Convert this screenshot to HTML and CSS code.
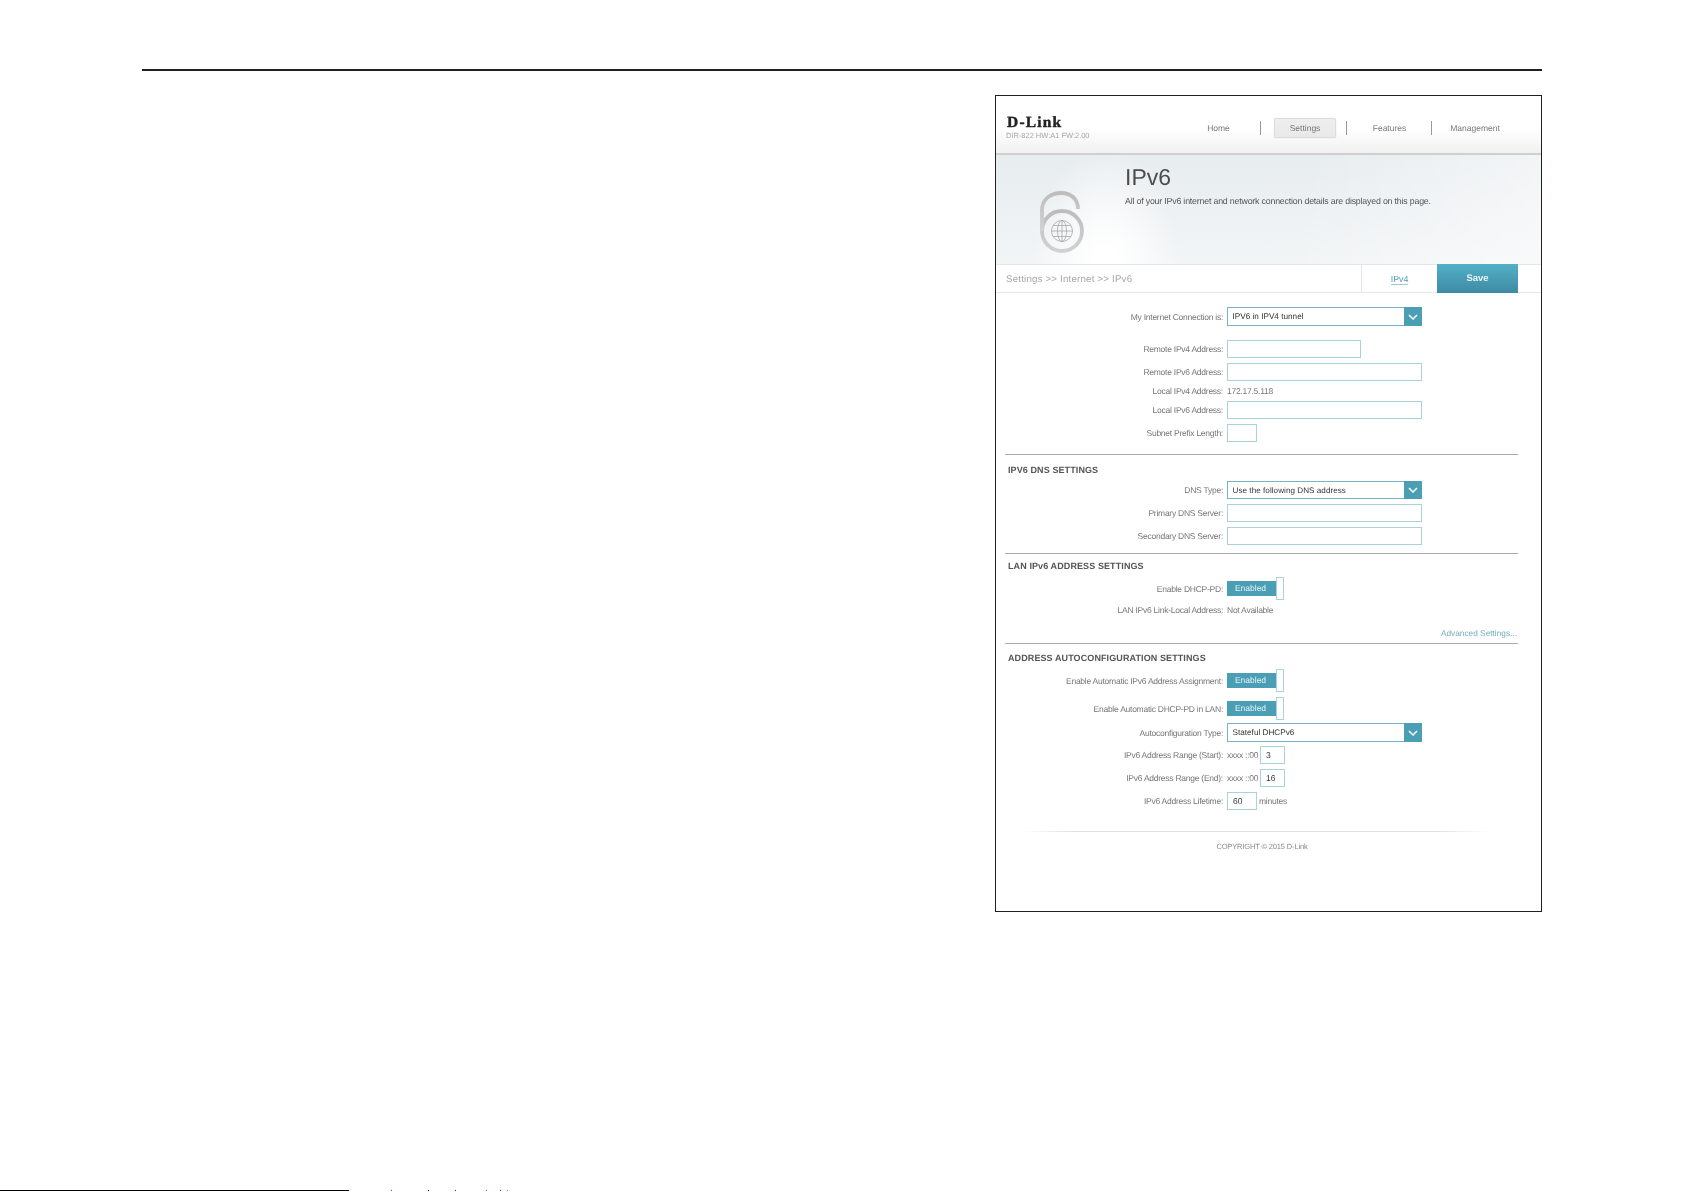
FILE: index.html
```html
<!DOCTYPE html>
<html lang="en">
<head>
<meta charset="utf-8">
<title>D-Link IPv6 Settings</title>
<link rel="stylesheet" href="styles.css">
</head>
<body>
<div class="page">
  <div class="top-rule"></div>
  <div class="stage">
    <main class="window">
      <header class="masthead">
        <div class="brand">
          <div class="logo">D-Link</div>
          <div class="model">DIR-822 HW:A1 FW:2.00</div>
        </div>
        <nav class="nav">
          <a class="nav-item nav-home">Home</a>
          <span class="nav-sep"></span>
          <a class="nav-item nav-active">Settings</a>
          <span class="nav-sep"></span>
          <a class="nav-item nav-features">Features</a>
          <span class="nav-sep"></span>
          <a class="nav-item nav-manage">Management</a>
        </nav>
      </header>
      <section class="hero">
        <svg class="lock" width="50" height="66" viewBox="0 0 50 66" aria-hidden="true">
          <defs>
            <linearGradient id="ring" x1="0" y1="0" x2="0" y2="1">
              <stop offset="0" stop-color="#bdbdbd"/>
              <stop offset="1" stop-color="#d2d2d2"/>
            </linearGradient>
          </defs>
          <path class="lock-ring" d="M44 41A20 20 0 1 1 4 41A20 20 0 1 1 44 41Z"/>
          <path class="lock-ring" d="M4 41V20C4 9 13 3 23 3C33 3 40 9 40 19"/>
          <g class="globe">
            <circle cx="24" cy="41" r="10.500"/>
            <ellipse cx="24" cy="41" rx="4.500" ry="10.500"/>
            <path d="M24 30.500V51.500M13.500 41H34.500M15 35.500H33M15 46.500H33"/>
          </g>
        </svg>
        <div class="hero-text">
          <h1 class="title">IPv6</h1>
          <p class="subtitle">All of your IPv6 internet and network connection details are displayed on this page.</p>
        </div>
      </section>
      <div class="crumbbar">
        <div class="crumbs">Settings &gt;&gt; Internet &gt;&gt; IPv6</div>
        <a class="tab-link"><span>IPv4</span></a>
        <a class="save">Save</a>
      </div>

      <section class="form">
        <div class="row row-select first">
          <label class="label">My Internet Connection is:</label>
          <div class="select"><span class="select-text">IPV6 in IPV4 tunnel</span><span class="arrow"><svg width="10" height="6" viewBox="0 0 10 6"><path d="M1 1L5 5L9 1"/></svg></span></div>
        </div>
        <div class="row row-input gap-large">
          <label class="label">Remote IPv4 Address:</label>
          <div class="input input-medium"></div>
        </div>
        <div class="row row-input">
          <label class="label">Remote IPv6 Address:</label>
          <div class="input"></div>
        </div>
        <div class="row row-text">
          <label class="label">Local IPv4 Address:</label>
          <span class="value">172.17.5.118</span>
        </div>
        <div class="row row-input flush">
          <label class="label">Local IPv6 Address:</label>
          <div class="input"></div>
        </div>
        <div class="row row-input">
          <label class="label">Subnet Prefix Length:</label>
          <div class="input input-small"></div>
        </div>
      </section>

      <section class="form ruled ruled-dns">
        <h2 class="heading">IPV6 DNS SETTINGS</h2>
        <div class="row row-select row-select-short after-heading">
          <label class="label">DNS Type:</label>
          <div class="select"><span class="select-text small">Use the following DNS address</span><span class="arrow"><svg width="10" height="6" viewBox="0 0 10 6"><path d="M1 1L5 5L9 1"/></svg></span></div>
        </div>
        <div class="row row-input">
          <label class="label">Primary DNS Server:</label>
          <div class="input"></div>
        </div>
        <div class="row row-input">
          <label class="label">Secondary DNS Server:</label>
          <div class="input"></div>
        </div>
      </section>

      <section class="form ruled ruled-lan">
        <h2 class="heading">LAN IPv6 ADDRESS SETTINGS</h2>
        <div class="row row-toggle after-heading-toggle">
          <label class="label">Enable DHCP-PD:</label>
          <div class="toggle"><span class="toggle-on">Enabled</span><span class="toggle-knob"></span></div>
        </div>
        <div class="row row-text">
          <label class="label">LAN IPv6 Link-Local Address:</label>
          <span class="value">Not Available</span>
        </div>
        <a class="advanced">Advanced Settings...</a>
      </section>

      <section class="form ruled ruled-auto">
        <h2 class="heading">ADDRESS AUTOCONFIGURATION SETTINGS</h2>
        <div class="row row-toggle after-heading-toggle">
          <label class="label">Enable Automatic IPv6 Address Assignment:</label>
          <div class="toggle"><span class="toggle-on">Enabled</span><span class="toggle-knob"></span></div>
        </div>
        <div class="row row-toggle">
          <label class="label">Enable Automatic DHCP-PD in LAN:</label>
          <div class="toggle"><span class="toggle-on">Enabled</span><span class="toggle-knob"></span></div>
        </div>
        <div class="row row-select micro">
          <label class="label">Autoconfiguration Type:</label>
          <div class="select"><span class="select-text">Stateful DHCPv6</span><span class="arrow"><svg width="10" height="6" viewBox="0 0 10 6"><path d="M1 1L5 5L9 1"/></svg></span></div>
        </div>
        <div class="row row-input tight">
          <label class="label">IPv6 Address Range (Start):</label>
          <span class="value prefix">xxxx ::00</span>
          <div class="input input-tiny">3</div>
        </div>
        <div class="row row-input">
          <label class="label">IPv6 Address Range (End):</label>
          <span class="value prefix">xxxx ::00</span>
          <div class="input input-tiny">16</div>
        </div>
        <div class="row row-input">
          <label class="label">IPv6 Address Lifetime:</label>
          <div class="input input-small">60</div>
          <span class="value unit">minutes</span>
        </div>
      </section>

      <footer class="footer">
        <div class="footer-line"></div>
        <div class="copyright">COPYRIGHT © 2015 D-Link</div>
      </footer>
    </main>
  </div>
  <div class="clipped-line">
    <span class="clip-bar"></span>
    <span class="clip-dot dot-a"></span>
    <span class="clip-dot dot-b"></span>
    <span class="clip-dot dot-c"></span>
    <span class="clip-dot dot-d"></span>
    <span class="clip-dot dot-e"></span>
    <span class="clip-dot dot-f"></span>
  </div>
</div>
</body>
</html>
```

FILE: styles.css
```css
* { box-sizing: border-box; }
html, body { margin: 0; padding: 0; background: #fff; }
body { font-family: "Liberation Sans", Arial, sans-serif; color: #777; text-rendering: geometricPrecision; }
.page { height: 1191px; width: 1685px; display: flex; flex-direction: column; overflow: hidden; }

.top-rule { height: 2px; margin: 69px 143px 0 142px; background: #231f20; flex: none; }
.stage { flex: none; display: flex; justify-content: flex-end; padding: 24px 143px 0 0; }
.window { width: 547px; height: 817px; border: 1px solid #231f20; background: #fff; overflow: hidden; filter: blur(.3px); }

/* masthead */
.masthead { height: 59px; display: flex; background: linear-gradient(#fff 55%, #f1f1f1 96.500%, #cfcfcf 96.500%, #cfcfcf); }
.brand { width: 170px; padding: 19px 0 0 11px; }
.logo { font-family: "Liberation Serif", serif; font-weight: bold; font-size: 15.500px; line-height: 16px; color: #222; letter-spacing: 1.200px; -webkit-text-stroke: .4px #222; }
.model { font-size: 7.500px; line-height: 10px; margin-left: -1px; color: #a5a5a5; letter-spacing: -.02px; }
.nav { display: flex; align-items: center; height: 20px; margin-top: 22px; font-size: 8.500px; color: #777; }
.nav-item { text-align: center; line-height: 20px; }
.nav-home { width: 94px; padding-left: 11px; }
.nav-sep { width: 1px; height: 14px; background: #999; flex: none; }
.nav-active { width: 62px; margin: 0 10px 0 13px; height: 20px; line-height: 18px; background: linear-gradient(#eee, #e9e9e9); border: 1px solid #ddd; border-radius: 2px 2px 0 0; box-shadow: 0 0 1px #ccc; }
.nav-features { width: 84px; padding-left: 1px; }
.nav-manage { width: 85px; padding-left: 1px; }

/* hero */
.hero { height: 109px; display: flex; background:
  radial-gradient(ellipse 75px 130px at 110px 120px, rgba(255,255,255,1) 20%, rgba(255,255,255,0) 100%),
  linear-gradient(100deg, rgba(255,255,255,0) 55%, rgba(255,255,255,.5) 100%),
  linear-gradient(#e7ecee, #f2f5f6 100%); }
.lock { flex: none; margin: 35px 0 0 42px; }
.lock-ring { fill: none; stroke: url(#ring); stroke-width: 3.800; }
.globe circle, .globe ellipse, .globe path { fill: none; stroke: #a8a8a8; stroke-width: .8; }
.hero-text { margin-left: 37px; }
.title { margin: 9px 0 0; font-size: 23px; line-height: 26px; font-weight: normal; color: #4c4c4c; }
.subtitle { margin: 5px 0 0; font-size: 8.800px; line-height: 12px; color: #555; white-space: nowrap; letter-spacing: -.19px; }

/* breadcrumb */
.crumbbar { height: 29px; display: flex; border-top: 1px solid #e4e6e7; border-bottom: 1px solid #e6e6e6; padding-right: 23px; background: #fff; }
.crumbs { flex: 1; padding-left: 10px; line-height: 29px; font-size: 9.700px; color: #a6a6a6; letter-spacing: .2px; }
.tab-link { width: 76px; text-align: center; line-height: 28px; font-size: 8.800px; color: #4a9fb5; border-left: 1px solid #e6e6e6; }
.tab-link span { border-bottom: 1px solid #9cc9d5; }
.save { width: 81px; margin: -1px 0; height: 29px; line-height: 29px; text-align: center; font-size: 9.500px; font-weight: bold; color: #e9f3f6; background: linear-gradient(#52b0c8, #3d8ba3); }

/* form */
.form { display: flex; flex-direction: column; }
.row { display: flex; align-items: center; margin-top: 5px; }
.label { width: 227px; flex: none; text-align: right; font-size: 8.500px; letter-spacing: -.25px; color: #767676; white-space: nowrap; margin-right: 4px; }
.row-select { height: 19px; }
.row-select-short { height: 18px; }
.row-input { height: 18px; }
.row-text { height: 20px; margin-top: 0; }
.row-toggle { height: 23px; }
.first { margin-top: 14px; }
.gap-large { margin-top: 14px; }
.flush { margin-top: 0; }
.tight { margin-top: 4px; }
.micro { margin-top: 3px; }
.after-heading { margin-top: 5px; }
.after-heading-toggle { margin-top: 5px; }

.select { width: 195px; height: 100%; display: flex; border: 1px solid #76b3c4; border-right: 0; background: #fff; }
.select-text { flex: 1; padding-left: 4.500px; font-size: 8.200px; line-height: 18px; color: #333; }
.select-text.small { font-size: 8.100px; letter-spacing: .05px; line-height: 17px; }
.arrow { width: 18px; background: #4a9fb5; display: flex; align-items: center; justify-content: center; margin: -1px 0; }
.arrow path { fill: none; stroke: #fff; stroke-width: 1.500; }

.input { width: 195px; height: 100%; border: 1px solid #a9d2dc; background: #fff; font-size: 8.500px; line-height: 16px; padding-left: 5px; color: #333; }
.input-medium { width: 134px; }
.input-small { width: 30px; }
.input-tiny { width: 25px; }
.value { font-size: 8.500px; letter-spacing: -.25px; color: #777; white-space: nowrap; }
.prefix { width: 33px; flex: none; }
.unit { margin-left: 2px; }

.ruled { margin: 0 23px 0 9px; border-top: 1px solid #aaa; }
.ruled .row { margin-left: -9px; margin-right: -23px; }
.ruled-dns { margin-top: 12px; }
.ruled-lan { margin-top: 8px; }
.ruled-auto { margin-top: 4px; }
.heading { margin: 9px 0 0 3px; font-size: 9px; line-height: 12px; font-weight: bold; color: #555; letter-spacing: .1px; white-space: nowrap; }
.ruled-lan .heading { margin-top: 6px; }
.ruled-auto .heading { margin-top: 8px; }
.advanced { margin-top: 7px; margin-right: 1px; align-self: flex-end; font-size: 8.300px; line-height: 12px; color: #74aebd; }

.toggle { display: flex; align-items: center; height: 100%; }
.toggle-on { width: 49px; height: 15px; line-height: 15px; background: #4a9fb5; color: #e6f2f5; font-size: 8.500px; text-align: center; padding-right: 2px; }
.toggle-knob { width: 8px; height: 23px; border: 1px solid #a9d2dc; background: #fff; }

.footer { margin-top: 21px; }
.footer-line { height: 1px; margin: 0 50px 0 24px; background: linear-gradient(90deg, rgba(225,225,225,0), #e0e0e0 12%, #e0e0e0 88%, rgba(225,225,225,0)); }
.copyright { margin-top: 9px; padding-right: 13px; text-align: center; font-size: 7.500px; letter-spacing: -.15px; line-height: 12px; color: #8a8a8a; }

/* cropped text sliver at the bottom edge */
.clipped-line { margin-top: auto; height: 1px; display: flex; flex: none; }
.clip-bar { width: 349px; height: 1px; background: #000; flex: none; }
.clip-dot { width: 1px; height: 1px; flex: none; }
.dot-a { margin-left: 42px; background: #c2263a; }
.dot-b { margin-left: 36px; background: #000; }
.dot-c { margin-left: 26px; background: #2222cc; }
.dot-d { margin-left: 30px; background: #c2263a; }
.dot-e { margin-left: 13px; background: #2222cc; }
.dot-f { margin-left: 6px; background: #139a9a; }
```
